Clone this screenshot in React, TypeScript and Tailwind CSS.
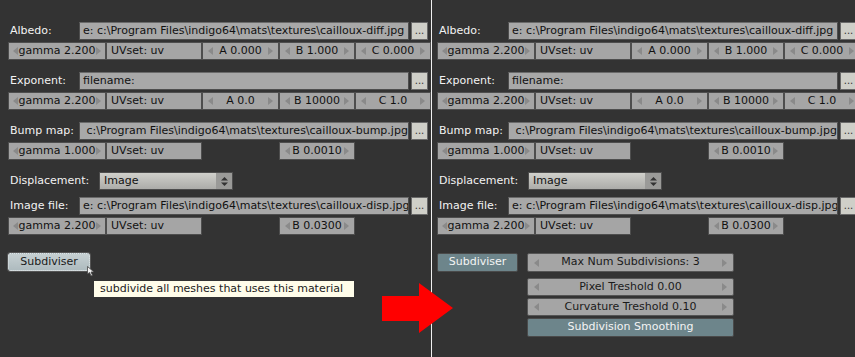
import React from "react";

const font = "font-['DejaVu_Sans',sans-serif]";

function Tri({ dir }: { dir: "l" | "r" }) {
  return (
    <svg width="5" height="8" viewBox="0 0 5 8" className="shrink-0">
      {dir === "l" ? (
        <polygon points="5,0 0,4 5,8" fill="#8a8a8a" />
      ) : (
        <polygon points="0,0 5,4 0,8" fill="#8a8a8a" />
      )}
    </svg>
  );
}

function NumField({ w, text, tight }: { w: string; text: string; tight?: boolean }) {
  return (
    <div
      className={`flex h-[18px] shrink-0 items-center border border-[#4e4e4e] bg-[#a5a5a5] text-[11px] text-[#111] ${w} ${
        tight ? "justify-center gap-[1px] px-[2px]" : "justify-between px-[5px]"
      }`}
    >
      <Tri dir="l" />
      <span className="whitespace-nowrap">{text}</span>
      <Tri dir="r" />
    </div>
  );
}

function TextField({ w, text }: { w: string; text: string }) {
  return (
    <div
      className={`flex h-[18px] shrink-0 items-center border border-[#4e4e4e] bg-[#a5a5a5] px-[4px] text-[11px] text-[#111] ${w}`}
    >
      <span className="whitespace-nowrap">{text}</span>
    </div>
  );
}

function FileRow({ label, value }: { label: string; value: string }) {
  return (
    <div className="flex h-[18px] items-center">
      <div className="w-[71px] shrink-0 pl-[2px] text-[11px] text-[#f2f2f2]">{label}</div>
      <div className="flex h-[18px] w-[330px] shrink-0 items-center overflow-hidden border border-[#4e4e4e] border-t-[#6a6a6a] bg-[#a8a8a8] pl-[3px] text-[11px] text-[#111]">
        <span className="whitespace-pre">{value}</span>
      </div>
      <div className="ml-[2px] flex h-[18px] w-[17px] shrink-0 items-center justify-center border border-[#6a6a6a] bg-[#cfcfc8] text-[10px] leading-none text-[#333]">
        ...
      </div>
    </div>
  );
}

function ParamRow({ gamma, a, b, c }: { gamma: string; a?: string; b: string; c?: string }) {
  return (
    <div className="mt-[2px] flex">
      <NumField w="w-[98px]" text={`gamma ${gamma}`} tight />
      <TextField w="w-[96px]" text="UVset: uv" />
      {a ? <NumField w="w-[77px]" text={a} /> : <div className="w-[77px] shrink-0" />}
      <NumField w="w-[76px]" text={b} />
      {c && <NumField w="w-[76px]" text={c} />}
    </div>
  );
}

function Settings() {
  return (
    <>
      <FileRow label="Albedo:" value="e: c:\Program Files\indigo64\mats\textures\cailloux-diff.jpg" />
      <ParamRow gamma="2.200" a="A 0.000" b="B 1.000" c="C 0.000" />

      <div className="mt-[12px]">
        <FileRow label="Exponent:" value="filename:" />
      </div>
      <ParamRow gamma="2.200" a="A 0.0" b="B 10000" c="C 1.0" />

      <div className="mt-[12px]">
        <FileRow label="Bump map:" value=" c:\Program Files\indigo64\mats\textures\cailloux-bump.jpg" />
      </div>
      <ParamRow gamma="1.000" b="B 0.0010" />

      <div className="mt-[12px] flex h-[18px] items-center">
        <div className="w-[91px] shrink-0 pl-[2px] text-[11px] text-[#f2f2f2]">Displacement:</div>
        <div className="flex h-[18px] w-[134px] shrink-0 items-center border border-[#4e4e4e] bg-gradient-to-b from-[#d0d0cb] to-[#acaca9] text-[11px] text-[#111]">
          <span className="flex-1 pl-[4px]">Image</span>
          <div className="flex h-full w-[16px] items-center justify-center bg-[#9a9a98]">
            <svg width="7" height="9" viewBox="0 0 7 9">
              <polygon points="0,3.5 3.5,0 7,3.5" fill="#333" />
              <polygon points="0,5.5 3.5,9 7,5.5" fill="#333" />
            </svg>
          </div>
        </div>
      </div>

      <div className="mt-[7px]">
        <FileRow label="Image file:" value="e: c:\Program Files\indigo64\mats\textures\cailloux-disp.jpg" />
      </div>
      <ParamRow gamma="2.200" b="B 0.0300" />
    </>
  );
}

function GrayBar({ text, h }: { text: string; h: string }) {
  return (
    <div
      className={`flex w-[207px] items-center justify-between rounded-[2px] border border-[#555] bg-[#a5a5a5] px-[6px] text-[11px] text-[#1a1a1a] ${h}`}
    >
      <Tri dir="l" />
      <span>{text}</span>
      <Tri dir="r" />
    </div>
  );
}

export default function App() {
  return (
    <div className={`relative flex h-[357px] w-[855px] overflow-hidden bg-[#333333] ${font}`}>
      <div className="relative w-[431px] shrink-0 overflow-hidden">
        <div className="w-[430px] pl-[8px] pt-[22px]">
          <div className="w-[424px]">
            <Settings />
          </div>
          <div className="mt-[18px]">
            <div className="flex h-[18px] w-[82px] items-center justify-center rounded-[2px] border border-dotted border-[#e0e6e8] bg-gradient-to-b from-[#c6d0d2] to-[#aebbbf] text-[11px] text-[#1a1a1a] outline outline-1 outline-[#555]">
              Subdiviser
            </div>
          </div>
        </div>
        <svg width="8" height="11" viewBox="0 0 8 11" className="absolute left-[87px] top-[266px]">
          <polygon points="0.5,0.5 0.5,8 2.5,6.5 4,10 5.5,9.3 4,6 7,6" fill="#f2f2f2" stroke="#444" strokeWidth="0.8" />
        </svg>
        <div className="absolute left-[94px] top-[281px] flex h-[16px] w-[260px] items-center bg-[#fffdea] pl-[6px] text-[11px] text-[#222]">
          subdivide all meshes that uses this material
        </div>
      </div>

      <div className="w-px shrink-0 bg-[#f0f0f0]" />

      <div className="relative flex-1 overflow-hidden">
        <div className="pl-[5px] pt-[22px]">
          <div className="w-[424px]">
            <Settings />
          </div>
          <div className="mt-[18px] flex gap-[9px]">
            <div className="flex h-[19px] w-[81px] shrink-0 items-center justify-center rounded-[2px] border border-[#4a4a4a] bg-[#6d858b] text-[11px] text-[#f4f4f4]">
              Subdiviser
            </div>
            <div className="flex flex-col">
              <GrayBar text="Max Num Subdivisions: 3" h="h-[19px]" />
              <div className="mt-[6px] flex flex-col gap-[2px]">
                <GrayBar text="Pixel Treshold 0.00" h="h-[18px]" />
                <GrayBar text="Curvature Treshold 0.10" h="h-[18px]" />
                <div className="flex h-[19px] w-[207px] items-center justify-center rounded-[2px] border border-[#4a4a4a] bg-[#6d858b] text-[11px] text-[#f4f4f4]">
                  Subdivision Smoothing
                </div>
              </div>
            </div>
          </div>
        </div>
      </div>

      <svg width="855" height="357" className="pointer-events-none absolute left-0 top-0">
        <polygon points="382,296 419,296 419,283 453,308 419,333 419,321 382,321" fill="#ff0000" />
      </svg>
    </div>
  );
}
